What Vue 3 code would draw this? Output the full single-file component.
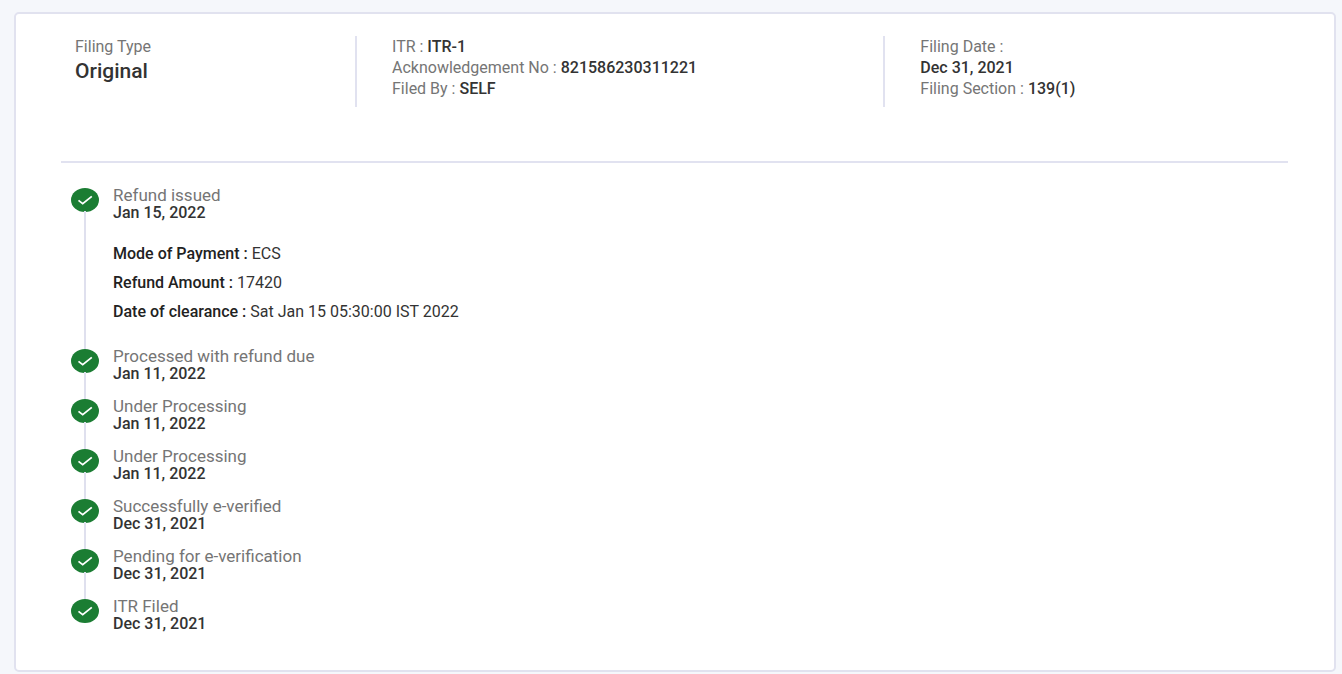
<script setup>
const refundDetails = [
  { label: 'Mode of Payment', value: 'ECS' },
  { label: 'Refund Amount', value: '17420' },
  { label: 'Date of clearance', value: 'Sat Jan 15 05:30:00 IST 2022' },
]

const steps = [
  { title: 'Refund issued', date: 'Jan 15, 2022', details: refundDetails },
  { title: 'Processed with refund due', date: 'Jan 11, 2022' },
  { title: 'Under Processing', date: 'Jan 11, 2022' },
  { title: 'Under Processing', date: 'Jan 11, 2022' },
  { title: 'Successfully e-verified', date: 'Dec 31, 2021' },
  { title: 'Pending for e-verification', date: 'Dec 31, 2021' },
  { title: 'ITR Filed', date: 'Dec 31, 2021' },
]
</script>

<template>
  <main class="card">
    <header class="summary">
      <div class="cell">
        <div>Filing Type</div>
        <div class="type">Original</div>
      </div>
      <div class="cell">
        <div>ITR : <b>ITR-1</b></div>
        <div>Acknowledgement No : <b>821586230311221</b></div>
        <div>Filed By : <b>SELF</b></div>
      </div>
      <div class="cell">
        <div>Filing Date :</div>
        <div><b>Dec 31, 2021</b></div>
        <div>Filing Section : <b>139(1)</b></div>
      </div>
    </header>
    <hr class="rule" />
    <ol class="timeline">
      <li v-for="(step, i) in steps" :key="i" class="step">
        <svg class="tick" viewBox="0 0 28 24" width="28" height="24" aria-hidden="true">
          <ellipse cx="14" cy="12" rx="14" ry="12" fill="#1b7d33" />
          <path d="M7.5 12.4 L11.7 15.6 L20.8 8.4" fill="none" stroke="#fff" stroke-width="1.8" />
        </svg>
        <div class="body">
          <div class="title">{{ step.title }}</div>
          <div class="date">{{ step.date }}</div>
          <dl v-if="step.details" class="details">
            <div v-for="d in step.details" :key="d.label" class="detail">
              <dt>{{ d.label }} :</dt>
              <dd>{{ d.value }}</dd>
            </div>
          </dl>
        </div>
      </li>
    </ol>
  </main>
</template>

<style>
body {
  background: #f5f7fb;
}
</style>

<style scoped>
.card {
  margin: 12px 6px 3px 14px;
  padding: 22px 0 38px;
  border: 2px solid #e1e2ef;
  border-radius: 5px;
  background: #fff;
  color: #333;
  font-family: Roboto, "Liberation Sans", sans-serif;
  font-size: 16px;
}
.summary {
  display: grid;
  grid-template-columns: 3fr 5fr 4fr;
  margin: 0 28px 0 22px;
  line-height: 21px;
  color: #757575;
}
.cell {
  min-height: 71px;
  box-sizing: border-box;
  padding-left: 35px;
  border-left: 2px solid #e1e2f0;
}
.cell:first-child {
  border-color: transparent;
}
.cell b {
  font-weight: 500;
  color: #333;
}
.type {
  font-size: 21px;
  line-height: 28px;
  font-weight: 500;
  color: #333;
}
.rule {
  height: 2px;
  margin: 54px 46px 24px 45px;
  border: 0;
  background: #e1e2f0;
}
.timeline {
  list-style: none;
  margin: 0;
  padding: 0 55px;
}
.step {
  position: relative;
  display: flex;
  align-items: flex-start;
  gap: 14px;
  min-height: 50px;
}
.step:last-child {
  min-height: 0;
}
.step:not(:last-child)::before {
  content: "";
  position: absolute;
  top: 24px;
  bottom: -2px;
  left: 13px;
  width: 2px;
  background: #dfe0ee;
}
.tick {
  flex: none;
  margin-top: 1px;
}
.title,
.date {
  line-height: 17px;
}
.title {
  font-size: 17px;
  color: #757575;
}
.date {
  font-weight: 500;
}
.details {
  margin: 18px 0 22px;
  line-height: 29px;
}
.detail {
  display: flex;
  gap: 4px;
}
.detail dt {
  font-weight: 500;
  color: #222;
}
.detail dd {
  margin: 0;
}
</style>
